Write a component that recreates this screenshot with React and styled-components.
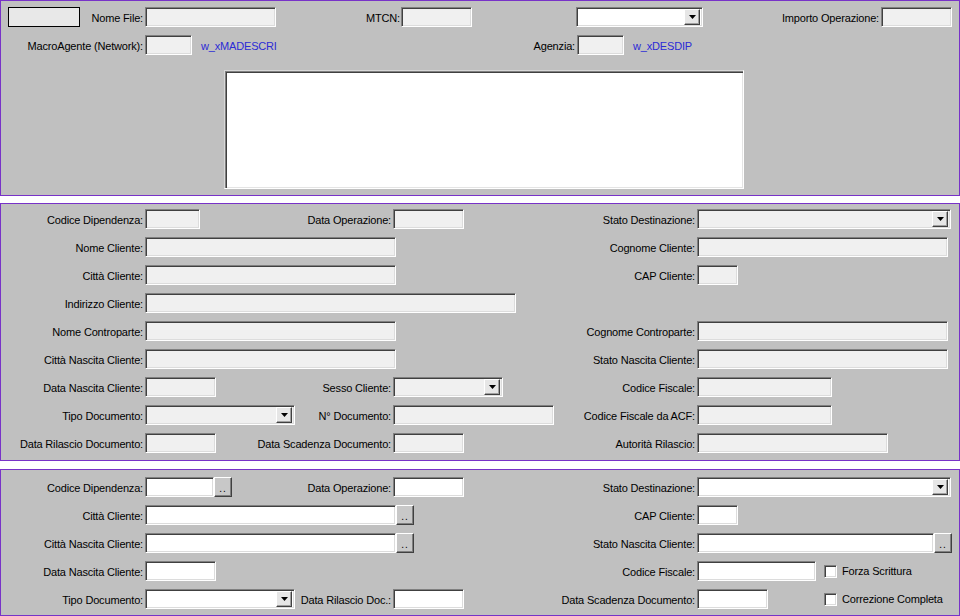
import React from "react";
import styled, { createGlobalStyle } from "styled-components";

const GlobalStyle = createGlobalStyle`
  html, body {
    margin: 0;
    padding: 0;
    background: #fff;
  }
  body {
    font-family: "Liberation Sans", Arial, sans-serif;
    font-size: 11px;
    letter-spacing: -0.17px;
    color: #000;
  }
`;

const Page = styled.div`
  width: 960px;
  height: 616px;
  display: flex;
  flex-direction: column;
  background: #fff;
`;

const Panel = styled.section`
  box-sizing: border-box;
  flex: none;
  height: ${(p) => p.$h}px;
  margin-bottom: ${(p) => p.$mb || 0}px;
  padding-top: ${(p) => p.$pt || 0}px;
  border: 1px solid #7832c8;
  background: #c0c0c0;
`;

const Row = styled.div`
  display: grid;
  grid-template-columns: ${(p) => p.$cols};
  height: 28px;
`;

const Label = styled.span`
  grid-row: 1;
  grid-column: ${(p) => p.$col};
  justify-self: end;
  align-self: center;
  padding-top: 1px;
  padding-right: ${(p) => p.$pr ?? 2}px;
  white-space: nowrap;
`;

const Cell = styled.div`
  grid-row: 1;
  grid-column: ${(p) => p.$col};
  justify-self: start;
  align-self: center;
  display: flex;
  align-items: center;
  margin-left: ${(p) => p.$ml || 0}px;
`;

const TextBox = styled.div`
  box-sizing: border-box;
  flex: none;
  width: ${(p) => p.$w}px;
  height: 20px;
  background: ${(p) => (p.$on ? "#fff" : "#f0f0f0")};
  border: 1px solid;
  border-color: #808080 #fff #fff #808080;
  box-shadow: inset 1px 1px 0 #404040, inset -1px -1px 0 #dcdcdc;
`;

const SelectBox = styled(TextBox)`
  display: flex;
  justify-content: flex-end;
  align-items: center;
  padding: 0 2px;
`;

const DropBtn = styled.span`
  box-sizing: border-box;
  width: 16px;
  height: 16px;
  display: flex;
  align-items: center;
  justify-content: center;
  background: #e6e6e6;
  border: 1px solid;
  border-color: #fff #404040 #404040 #fff;
  box-shadow: inset -1px -1px 0 #a0a0a0;
`;

const DotsBtn = styled.span`
  box-sizing: border-box;
  flex: none;
  width: 18px;
  height: 20px;
  display: flex;
  align-items: flex-end;
  justify-content: center;
  padding-bottom: 3px;
  background: #c8c8c8;
  border: 1px solid;
  border-color: #fff #404040 #404040 #fff;
  box-shadow: inset -1px -1px 0 #808080;
  font-size: 10px;
  line-height: 8px;
  letter-spacing: 1px;
`;

const CheckBox = styled.span`
  box-sizing: border-box;
  width: 13px;
  height: 13px;
  margin-right: 5px;
  background: #fff;
  border: 1px solid;
  border-color: #808080 #fff #fff #808080;
  box-shadow: inset 1px 1px 0 #404040, inset -1px -1px 0 #dcdcdc;
`;

const Link = styled.span`
  margin-left: 9px;
  padding-top: 1px;
  color: #2b2bd6;
  white-space: nowrap;
`;

const StampBox = styled.div`
  box-sizing: border-box;
  width: 72px;
  height: 20px;
  border: 1px solid #000;
  background: #e8e8e8;
`;

const Memo = styled.div`
  box-sizing: border-box;
  width: 520px;
  height: 119px;
  margin: 11px 0 0 223px;
  background: #fff;
  border: 1px solid;
  border-color: #d8d8d8 #fff #fff #d8d8d8;
  box-shadow: inset 1px 1px 0 #808080, inset 2px 2px 0 #404040,
    inset -1px -1px 0 #e4e4e4;
`;

const Select = ({ w, on }) => (
  <SelectBox $w={w} $on={on}>
    <DropBtn>
      <svg width="7" height="4" viewBox="0 0 7 4">
        <path d="M0 0h7L3.5 4z" fill="#000" />
      </svg>
    </DropBtn>
  </SelectBox>
);

const Check = ({ children, ml }) => (
  <Cell $col={4} $ml={ml}>
    <CheckBox />
    {children}
  </Cell>
);

const TOP = "144px 256px 176px 304px 1fr";
const COLS = "144px 248px 304px 1fr";

export default function App() {
  return (
    <Page>
      <GlobalStyle />

      <Panel $h={196} $mb={7} $pt={2}>
        <Row $cols={TOP}>
          <Cell $col={1} $ml={7}>
            <StampBox />
          </Cell>
          <Label $col={1}>Nome File:</Label>
          <Cell $col={2}>
            <TextBox $w={131} />
          </Cell>
          <Label $col={2} $pr={1}>MTCN:</Label>
          <Cell $col={3}>
            <TextBox $w={71} />
          </Cell>
          <Cell $col={4} $ml={-1}>
            <Select w={127} on />
          </Cell>
          <Label $col={4}>Importo Operazione:</Label>
          <Cell $col={5}>
            <TextBox $w={71} />
          </Cell>
        </Row>
        <Row $cols={TOP}>
          <Label $col={1}>MacroAgente (Network):</Label>
          <Cell $col={2}>
            <TextBox $w={47} />
            <Link>w_xMADESCRI</Link>
          </Cell>
          <Label $col={3}>Agenzia:</Label>
          <Cell $col={4}>
            <TextBox $w={47} />
            <Link>w_xDESDIP</Link>
          </Cell>
        </Row>
        <Memo />
      </Panel>

      <Panel $h={258} $mb={8} $pt={1}>
        <Row $cols={COLS}>
          <Label $col={1}>Codice Dipendenza:</Label>
          <Cell $col={2}>
            <TextBox $w={55} />
          </Cell>
          <Label $col={2}>Data Operazione:</Label>
          <Cell $col={3}>
            <TextBox $w={71} />
          </Cell>
          <Label $col={3}>Stato Destinazione:</Label>
          <Cell $col={4}>
            <Select w={254} />
          </Cell>
        </Row>
        <Row $cols={COLS}>
          <Label $col={1}>Nome Cliente:</Label>
          <Cell $col={2}>
            <TextBox $w={251} />
          </Cell>
          <Label $col={3}>Cognome Cliente:</Label>
          <Cell $col={4}>
            <TextBox $w={251} />
          </Cell>
        </Row>
        <Row $cols={COLS}>
          <Label $col={1}>Città Cliente:</Label>
          <Cell $col={2}>
            <TextBox $w={251} />
          </Cell>
          <Label $col={3}>CAP Cliente:</Label>
          <Cell $col={4}>
            <TextBox $w={41} />
          </Cell>
        </Row>
        <Row $cols={COLS}>
          <Label $col={1}>Indirizzo Cliente:</Label>
          <Cell $col={2}>
            <TextBox $w={371} />
          </Cell>
        </Row>
        <Row $cols={COLS}>
          <Label $col={1}>Nome Controparte:</Label>
          <Cell $col={2}>
            <TextBox $w={251} />
          </Cell>
          <Label $col={3}>Cognome Controparte:</Label>
          <Cell $col={4}>
            <TextBox $w={251} />
          </Cell>
        </Row>
        <Row $cols={COLS}>
          <Label $col={1}>Città Nascita Cliente:</Label>
          <Cell $col={2}>
            <TextBox $w={251} />
          </Cell>
          <Label $col={3}>Stato Nascita Cliente:</Label>
          <Cell $col={4}>
            <TextBox $w={251} />
          </Cell>
        </Row>
        <Row $cols={COLS}>
          <Label $col={1}>Data Nascita Cliente:</Label>
          <Cell $col={2}>
            <TextBox $w={71} />
          </Cell>
          <Label $col={2}>Sesso Cliente:</Label>
          <Cell $col={3}>
            <Select w={110} />
          </Cell>
          <Label $col={3}>Codice Fiscale:</Label>
          <Cell $col={4}>
            <TextBox $w={135} />
          </Cell>
        </Row>
        <Row $cols={COLS}>
          <Label $col={1}>Tipo Documento:</Label>
          <Cell $col={2}>
            <Select w={150} />
          </Cell>
          <Label $col={2}>N° Documento:</Label>
          <Cell $col={3}>
            <TextBox $w={161} />
          </Cell>
          <Label $col={3}>Codice Fiscale da ACF:</Label>
          <Cell $col={4}>
            <TextBox $w={135} />
          </Cell>
        </Row>
        <Row $cols={COLS}>
          <Label $col={1}>Data Rilascio Documento:</Label>
          <Cell $col={2}>
            <TextBox $w={71} />
          </Cell>
          <Label $col={2}>Data Scadenza Documento:</Label>
          <Cell $col={3}>
            <TextBox $w={71} />
          </Cell>
          <Label $col={3}>Autorità Rilascio:</Label>
          <Cell $col={4}>
            <TextBox $w={191} />
          </Cell>
        </Row>
      </Panel>

      <Panel $h={147} $pt={3}>
        <Row $cols={COLS}>
          <Label $col={1}>Codice Dipendenza:</Label>
          <Cell $col={2}>
            <TextBox $w={69} $on />
            <DotsBtn>..</DotsBtn>
          </Cell>
          <Label $col={2}>Data Operazione:</Label>
          <Cell $col={3}>
            <TextBox $w={71} $on />
          </Cell>
          <Label $col={3}>Stato Destinazione:</Label>
          <Cell $col={4}>
            <Select w={254} on />
          </Cell>
        </Row>
        <Row $cols={COLS}>
          <Label $col={1}>Città Cliente:</Label>
          <Cell $col={2}>
            <TextBox $w={251} $on />
            <DotsBtn>..</DotsBtn>
          </Cell>
          <Label $col={3}>CAP Cliente:</Label>
          <Cell $col={4}>
            <TextBox $w={41} $on />
          </Cell>
        </Row>
        <Row $cols={COLS}>
          <Label $col={1}>Città Nascita Cliente:</Label>
          <Cell $col={2}>
            <TextBox $w={251} $on />
            <DotsBtn>..</DotsBtn>
          </Cell>
          <Label $col={3}>Stato Nascita Cliente:</Label>
          <Cell $col={4}>
            <TextBox $w={237} $on />
            <DotsBtn>..</DotsBtn>
          </Cell>
        </Row>
        <Row $cols={COLS}>
          <Label $col={1}>Data Nascita Cliente:</Label>
          <Cell $col={2}>
            <TextBox $w={71} $on />
          </Cell>
          <Label $col={3}>Codice Fiscale:</Label>
          <Cell $col={4}>
            <TextBox $w={119} $on />
          </Cell>
          <Check ml={127}>Forza Scrittura</Check>
        </Row>
        <Row $cols={COLS}>
          <Label $col={1}>Tipo Documento:</Label>
          <Cell $col={2}>
            <Select w={150} on />
          </Cell>
          <Label $col={2}>Data Rilascio Doc.:</Label>
          <Cell $col={3}>
            <TextBox $w={71} $on />
          </Cell>
          <Label $col={3}>Data Scadenza Documento:</Label>
          <Cell $col={4}>
            <TextBox $w={71} $on />
          </Cell>
          <Check ml={127}>Correzione Completa</Check>
        </Row>
      </Panel>
    </Page>
  );
}
